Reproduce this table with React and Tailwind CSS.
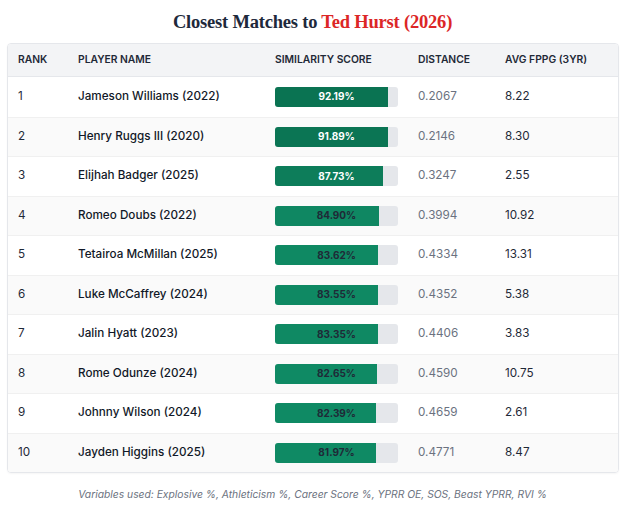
import React from "react";

const rows = [
  { rank: 1, name: "Jameson Williams (2022)", score: 92.19, dist: "0.2067", fppg: "8.22", color: "bg-[#0a7352]", text: "text-white" },
  { rank: 2, name: "Henry Ruggs III (2020)", score: 91.89, dist: "0.2146", fppg: "8.30", color: "bg-[#0b7554]", text: "text-white" },
  { rank: 3, name: "Elijhah Badger (2025)", score: 87.73, dist: "0.3247", fppg: "2.55", color: "bg-[#0d7d5a]", text: "text-white" },
  { rank: 4, name: "Romeo Doubs (2022)", score: 84.9, dist: "0.3994", fppg: "10.92", color: "bg-[#0f8762]", text: "text-[#1f2937]" },
  { rank: 5, name: "Tetairoa McMillan (2025)", score: 83.62, dist: "0.4334", fppg: "13.31", color: "bg-[#0f8963]", text: "text-[#1f2937]" },
  { rank: 6, name: "Luke McCaffrey (2024)", score: 83.55, dist: "0.4352", fppg: "5.38", color: "bg-[#0f8963]", text: "text-[#1f2937]" },
  { rank: 7, name: "Jalin Hyatt (2023)", score: 83.35, dist: "0.4406", fppg: "3.83", color: "bg-[#0f8963]", text: "text-[#1f2937]" },
  { rank: 8, name: "Rome Odunze (2024)", score: 82.65, dist: "0.4590", fppg: "10.75", color: "bg-[#0f8a64]", text: "text-[#1f2937]" },
  { rank: 9, name: "Johnny Wilson (2024)", score: 82.39, dist: "0.4659", fppg: "2.61", color: "bg-[#0f8a64]", text: "text-[#1f2937]" },
  { rank: 10, name: "Jayden Higgins (2025)", score: 81.97, dist: "0.4771", fppg: "8.47", color: "bg-[#0f8a64]", text: "text-[#1f2937]" },
];

export default function App() {
  return (
    <div className="w-[625px] h-[512px] bg-white font-['Inter',sans-serif] pt-[11px]">
      <h1 className="text-center font-['Liberation_Serif',serif] font-bold text-[18.5px] leading-[22px] text-[#1e293b] tracking-[-0.2px]">
        Closest Matches to <span className="text-[#dc2626]">Ted Hurst (2026)</span>
      </h1>
      <div className="mx-[7px] mt-[10px] w-[612px] border border-[#e5e7eb] rounded-[4px] overflow-hidden shadow-[0_1px_2px_rgba(0,0,0,0.04)]">
        <div className="flex items-center h-[33px] bg-[#f3f4f6] border-b border-[#e5e7eb] text-[10.3px] font-semibold text-[#1f2937] uppercase">
          <div className="w-[60px] pl-[10px]">Rank</div>
          <div className="w-[197px] pl-[10px]">Player Name</div>
          <div className="w-[143px] pl-[10px]">Similarity Score</div>
          <div className="w-[87px] pl-[10px]">Distance</div>
          <div className="flex-1 pl-[10px]">Avg FPPG (3YR)</div>
        </div>
        {rows.map((r, i) => (
          <div
            key={r.rank}
            className={`flex items-center h-[39.5px] text-[11.7px] ${i > 0 ? "border-t border-[#f0f0f0]" : ""} ${i % 2 === 1 ? "bg-[#fafafa]" : "bg-white"}`}
          >
            <div className="w-[60px] pl-[10px] text-[#1f2937]">{r.rank}</div>
            <div className="w-[197px] pl-[10px] font-medium text-[#111827]">{r.name}</div>
            <div className="w-[143px] pl-[10px]">
              <div className="relative w-[123px] h-[20px] bg-[#e5e7eb] rounded-[3px] overflow-hidden">
                <div className={`h-full ${r.color}`} style={{ width: `${r.score}%` }} />
                <div className={`absolute inset-0 flex items-center justify-center text-[10px] font-bold ${r.text}`}>
                  {r.score.toFixed(2)}%
                </div>
              </div>
            </div>
            <div className="w-[87px] pl-[10px] text-[#6b7280]">{r.dist}</div>
            <div className="flex-1 pl-[10px] text-[#1f2937]">{r.fppg}</div>
          </div>
        ))}
      </div>
      <p className="mt-[14px] text-center italic text-[10.3px] text-[#6b7280]">
        Variables used: Explosive %, Athleticism %, Career Score %, YPRR OE, SOS, Beast YPRR, RVI %
      </p>
    </div>
  );
}
